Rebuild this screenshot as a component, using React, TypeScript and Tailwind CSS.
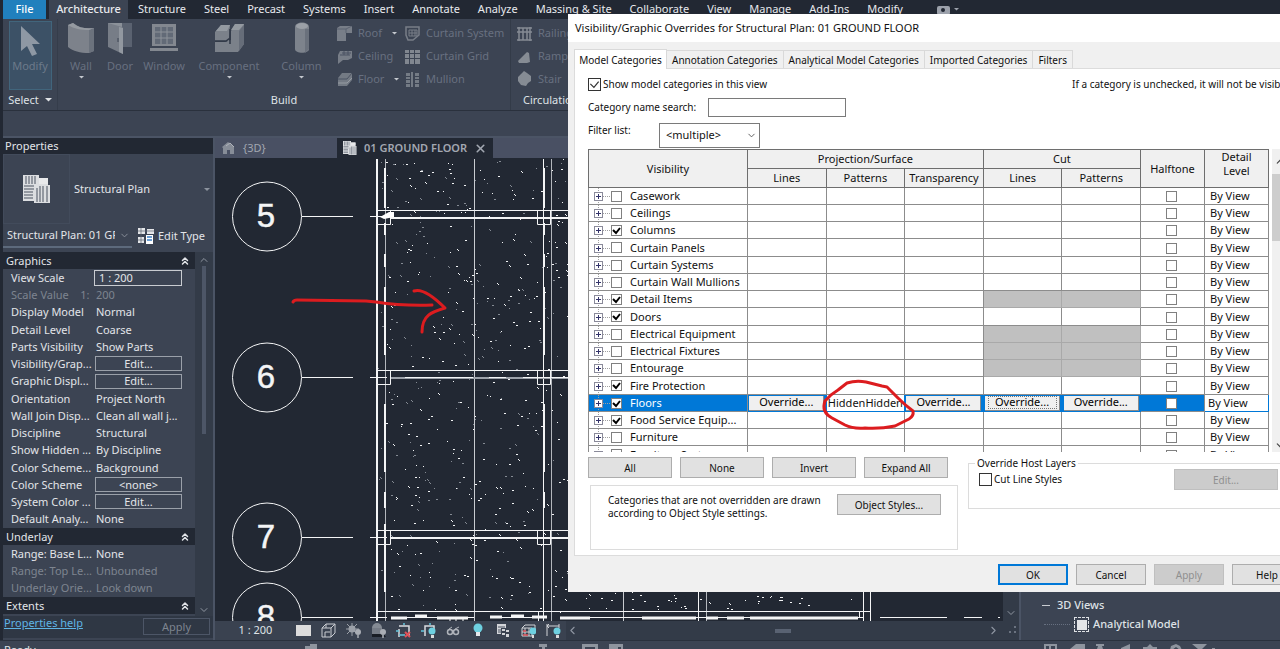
import * as React from 'react'
import clsx from 'clsx'
import { ChevronDown, ChevronLeft, ChevronRight, ChevronUp, ChevronsUp, X } from 'lucide-react'

const ribbonTabs = [
  'Structure',
  'Steel',
  'Precast',
  'Systems',
  'Insert',
  'Annotate',
  'Analyze',
  'Massing & Site',
  'Collaborate',
  'View',
  'Manage',
  'Add-Ins',
  'Modify',
]

type PropertyRow = {
  name: string
  value?: string
  kind?: 'header' | 'button' | 'input' | 'muted'
}

const propertyRows: PropertyRow[] = [
  { name: 'Graphics', kind: 'header' },
  { name: 'View Scale', value: '1 : 200', kind: 'input' },
  { name: 'Scale Value    1:', value: '200', kind: 'muted' },
  { name: 'Display Model', value: 'Normal' },
  { name: 'Detail Level', value: 'Coarse' },
  { name: 'Parts Visibility', value: 'Show Parts' },
  { name: 'Visibility/Grap...', value: 'Edit...', kind: 'button' },
  { name: 'Graphic Displ...', value: 'Edit...', kind: 'button' },
  { name: 'Orientation', value: 'Project North' },
  { name: 'Wall Join Disp...', value: 'Clean all wall j...' },
  { name: 'Discipline', value: 'Structural' },
  { name: 'Show Hidden ...', value: 'By Discipline' },
  { name: 'Color Scheme...', value: 'Background' },
  { name: 'Color Scheme', value: '<none>', kind: 'button' },
  { name: 'System Color ...', value: 'Edit...', kind: 'button' },
  { name: 'Default Analy...', value: 'None' },
  { name: 'Underlay', kind: 'header' },
  { name: 'Range: Base L...', value: 'None' },
  { name: 'Range: Top Le...', value: 'Unbounded', kind: 'muted' },
  { name: 'Underlay Orie...', value: 'Look down', kind: 'muted' },
  { name: 'Extents', kind: 'header' },
]

type Category = {
  name: string
  checked?: boolean
  noCut?: boolean
  selected?: boolean
}

const categories: Category[] = [
  { name: 'Casework' },
  { name: 'Ceilings' },
  { name: 'Columns', checked: true },
  { name: 'Curtain Panels' },
  { name: 'Curtain Systems' },
  { name: 'Curtain Wall Mullions' },
  { name: 'Detail Items', checked: true, noCut: true },
  { name: 'Doors', checked: true },
  { name: 'Electrical Equipment', noCut: true },
  { name: 'Electrical Fixtures', noCut: true },
  { name: 'Entourage', noCut: true },
  { name: 'Fire Protection', checked: true },
  { name: 'Floors', checked: true, selected: true },
  { name: 'Food Service Equip...', checked: true },
  { name: 'Furniture' },
  { name: 'Furniture Systems' },
]

const Caret = ({ className }: { className?: string }) => (
  <svg viewBox="0 0 8 4" className={clsx('shrink-0', className)} fill="currentColor">
    <path d="M0 0h8L4 4z" />
  </svg>
)

const WallIcon = () => (
  <svg width="28" height="30" viewBox="0 0 28 30">
    <path d="M1 2l5-2c6 5 13 6 21 5v23l-5 2C13 30 6 28 1 24z" fill="#7d828b" />
    <path d="M22 7l5-2v23l-5 2z" fill="#6b727d" />
    <path d="M1 2l5-2c6 5 13 6 21 5l-5 2C14 7 7 6 1 2z" fill="#959aa1" />
  </svg>
)

const DoorIcon = () => (
  <svg width="26" height="32" viewBox="0 0 26 32">
    <path d="M10 1h15v24H10z" fill="#5a6270" />
    <path d="M1 1h9l6 5v26L1 25z" fill="#777d87" />
    <path d="M16 6v26l-4-2V5z" fill="#9298a0" />
    <path d="M1 1h14v4z" fill="#8b9199" />
    <path d="M11 16v4" stroke="#3c4453" />
  </svg>
)

const WindowIcon = () => (
  <svg width="28" height="30" viewBox="0 0 28 30">
    <path d="M2 1h24v22H2zM0 25h28v3H0z" fill="#838890" />
    <path d="M5 4h18v17H5z" fill="#626a77" />
    <path d="M11 4v17M17 4v17M5 9h18M5 15h18" stroke="#8d929a" strokeWidth="1" />
  </svg>
)

const ComponentIcon = () => (
  <svg width="30" height="30" viewBox="0 0 30 30">
    <path d="M1 9l6-7h9l-1 16H1zM17 8l4-7h9v20l-6 8H1V19h10l6-2z" fill="#7b818a" />
    <path d="M7 2h9l-3 6H2zM21 1h9l-5 6h-8z" fill="#949aa1" />
    <path d="M25 8l5-6v19l-5 7z" fill="#666d79" />
    <path d="M1 18h11l4-3V6M16 15v6" stroke="#313947" strokeWidth="1.5" fill="none" />
  </svg>
)

const ColumnIcon = () => (
  <svg width="16" height="32" viewBox="0 0 16 32">
    <path d="M1 5c0-6 14-6 14 0v22c0 5-14 5-14 0z" fill="#7d838c" />
    <ellipse cx="8" cy="4" rx="6" ry="3" fill="#9ba0a7" />
    <path d="M11 7h4v20l-4 4z" fill="#6a717c" />
  </svg>
)

const smallShapes: Record<string, React.ReactNode> = {
  Roof: (
    <>
      <path d="M0 2l3-2h12v7H9v8H0z" fill="#787e88" />
      <path d="M0 3h9l6-3M9 7V3" stroke="#5b6370" fill="none" />
    </>
  ),
  Ceiling: (
    <>
      <path d="M3 2h12v7l-4 2H6l-5 4V6z" fill="#777d87" />
      <path d="M3 6h10M5 4h9M7 2v4M11 2v4" stroke="#4b5362" />
    </>
  ),
  Floor: (
    <>
      <path d="M5 1h10v7l-5 6H1V6z" fill="#737a84" />
      <path d="M1 7h9l5-6" stroke="#4b5362" fill="none" />
      <path d="M1 11h9l5-5" stroke="#969ba2" fill="none" />
    </>
  ),
  'Curtain System': (
    <>
      <path d="M1 1h13v8l-6 5H3L1 9z" fill="none" stroke="#787e88" strokeWidth="1.5" />
      <path d="M4 4h8v6H4zM4 7h8M7 4v6M10 4v6" fill="none" stroke="#787e88" />
    </>
  ),
  'Curtain Grid': (
    <path
      d="M0 1h4v3H0zM5 1h4v3H5zM10 1h5v3h-5zM0 5h4v4H0zM5 5h4v4H5zM10 5h5v4h-5zM0 10h4v5H0zM5 10h4v5H5zM10 10h5v5h-5z"
      fill="#818790"
    />
  ),
  Mullion: (
    <path
      d="M1 1h4v3H1zM1 5h4v2H1zM1 8h4v3H1zM1 12h4v3H1zM6 0h2v15H6zM10 1h4v3h-4zM10 5h4v2h-4zM10 8h4v3h-4zM10 12h4v3h-4z"
      fill="#747b85"
    />
  ),
  Railing: (
    <path d="M0 2h15M0 6h15M0 14h15M2 1v14M6 2v12M10 2v12M13 1v14" stroke="#858b94" strokeWidth="1.5" />
  ),
  Ramp: <path d="M1 12l9-9 2 1 1 9-3 1H2z" fill="#868c94" />,
  Stair: <path d="M1 6l3-3 3-3 3 2 4 3v5l-3 2-2 3-5-1-3-4z" fill="#868c94" />,
}

const SmallTool = ({ label, caret }: { label: string; caret?: boolean }) => (
  <button className="flex h-[23px] items-center gap-[6px] whitespace-nowrap text-[#687080]">
    <svg width="15" height="15" viewBox="0 0 15 15" className="shrink-0">
      {smallShapes[label]}
    </svg>
    {label}
    {caret && <Caret className="ml-1 w-[5px] text-[#c5c9cf]" />}
  </button>
)

const BigTool = ({
  label,
  icon,
  className,
  caret,
}: {
  label: string
  icon: React.ReactNode
  className: string
  caret?: boolean
}) => (
  <button className={clsx('flex flex-col items-center text-[#687080]', className)}>
    <span className="flex h-8 items-center">{icon}</span>
    <span className="mt-1 leading-4">{label}</span>
    {caret && <Caret className="mt-[2px] w-[5px] text-[#c5c9cf]" />}
  </button>
)

const PanelTitle = ({ children, className }: { children: React.ReactNode; className?: string }) => (
  <div className={clsx('mt-auto flex h-5 items-center gap-[6px] text-[#dfe2e6]', className ?? 'justify-center')}>
    {children}
  </div>
)

const Ribbon = () => (
  <header className="text-[11px]">
    <nav className="flex h-[19px] items-stretch gap-[18px] overflow-hidden bg-[#222833] pl-[3px] whitespace-nowrap text-[#e8eaee]">
      <div className="flex gap-[3px]">
        <button className="w-[43px] bg-[#2180bd] font-medium text-white">File</button>
        <button className="-mr-2 w-[79px] bg-[#3c4453] font-medium">Architecture</button>
      </div>
      {ribbonTabs.map((tab) => (
        <button key={tab}>{tab}</button>
      ))}
      <span className="flex items-center gap-1 pl-4 text-[#9ca1ab]">
        <svg width="13" height="10" viewBox="0 0 13 10">
          <rect y="1" width="13" height="9" rx="2" fill="#9ca1ab" />
          <circle cx="6" cy="5" r="2" fill="#222833" />
        </svg>
        <Caret className="w-[5px]" />
      </span>
    </nav>
    <div className="ml-[3px] flex h-[92px] border-b border-[#2a313d] bg-[#3c4453]">
      <section className="flex w-[55px] shrink-0 flex-col border-r border-[#353d4b]">
        <button className="mx-auto mt-[2px] flex h-[70px] w-[43px] flex-col items-center border border-[#41657c] bg-[#3c5166] text-[#6c7a8a]">
          <svg width="22" height="34" viewBox="0 0 22 34" className="mt-[2px]">
            <path d="M2 2v25l6-5 5 10 5-2-5-10h8z" fill="#8e98a4" />
          </svg>
          <span className="leading-4">Modify</span>
        </button>
        <PanelTitle>
          Select <Caret className="w-[7px]" />
        </PanelTitle>
      </section>
      <section className="flex w-[453px] shrink-0 flex-col border-r border-[#333b48]">
        <div className="flex pt-[3px]">
          <BigTool label="Wall" icon={<WallIcon />} className="ml-1 w-[38px]" caret />
          <BigTool label="Door" icon={<DoorIcon />} className="w-10" />
          <BigTool label="Window" icon={<WindowIcon />} className="w-12" />
          <BigTool label="Component" icon={<ComponentIcon />} className="w-[82px]" caret />
          <BigTool label="Column" icon={<ColumnIcon />} className="w-[63px]" caret />
          <div className="w-[68px] pl-1">
            <SmallTool label="Roof" caret />
            <SmallTool label="Ceiling" />
            <SmallTool label="Floor" caret />
          </div>
          <div className="pl-1">
            <SmallTool label="Curtain System" />
            <SmallTool label="Curtain Grid" />
            <SmallTool label="Mullion" />
          </div>
        </div>
        <PanelTitle>Build</PanelTitle>
      </section>
      <section className="flex w-24 flex-col pt-[3px] pl-[6px]">
        <SmallTool label="Railing" />
        <SmallTool label="Ramp" />
        <SmallTool label="Stair" />
        <PanelTitle className="pl-[6px]">Circulation</PanelTitle>
      </section>
    </div>
    <div className="ml-[3px] h-[27px] border-b-2 border-[#4b5465] bg-[#3c4453]" />
  </header>
)

const PlanIcon = ({ size }: { size: number }) => (
  <svg width={size} height={size} viewBox="0 0 28 28" className="shrink-0">
    <path d="M0 0h16v3h9v7h2v18H11v-2H0z" fill="#dcdee1" />
    <path
      d="M3 1v8M6 1v8M9 1v8M12 1v8M1 11h10M1 14h10M1 17h9M1 20h9M1 23h9M14 13v14M17 11v16M20 11v16M24 11v16"
      stroke="#4a5260"
    />
    <path d="M16 3h9v6h-9z" fill="#e8e9eb" />
  </svg>
)

const PropertiesPanel = () => (
  <aside className="ml-[3px] flex w-[212px] shrink-0 flex-col border-r-2 border-[#4b5465] bg-[#3c4453] pb-[2px] text-[11px] text-[#e3e5e9]">
    <h2 className="h-4 bg-[#222833] px-[2px] leading-4">Properties</h2>
    <button className="flex h-[70px] shrink-0 items-center pr-[3px] text-left">
      <span className="flex h-full w-[67px] items-center justify-center border border-[#424b5b]">
        <PlanIcon size={28} />
      </span>
      <span className="pl-1">Structural Plan</span>
      <Caret className="ml-auto w-[6px] text-[#8c939e]" />
    </button>
    <div className="flex h-7 items-start">
      <button className="flex h-6 w-[129px] items-center border-b-2 border-[#5d6a7c] pl-1">
        <span className="w-[108px] overflow-hidden text-left whitespace-nowrap">Structural Plan: 01 GROUND</span>
        <ChevronDown size={11} className="ml-1 shrink-0 text-[#8c939e]" />
      </button>
      <button className="flex h-6 items-center gap-1 pl-[6px]">
        <svg width="16" height="16" viewBox="0 0 16 16">
          <path d="M0 0h7v6H0zM9 1h7v5H9zM0 9h6v6H0z" fill="#e3e5e8" />
          <path d="M8 7h7v9H8z" fill="#fff" />
          <path d="M9 9h5M9 12h5" stroke="#3b7fc4" strokeWidth="1.5" />
          <path d="M3 0v15M0 3h16M0 12h7" stroke="#59616e" strokeWidth=".7" />
        </svg>
        Edit Type
      </button>
    </div>
    <div className="flex min-h-0 flex-1 overflow-hidden">
      <table className="w-[192px] table-fixed self-start">
        <colgroup>
          <col className="w-[89px]" />
          <col />
        </colgroup>
        <tbody>
          {propertyRows.map((row) =>
            row.kind === 'header' ? (
              <tr key={row.name} className="h-[17px] bg-[#222833] nth-[4n]:h-[18px]">
                <th colSpan={2} className="p-0 text-left font-normal">
                  <div className="flex items-center justify-between pr-1 pl-[3px] leading-4">
                    {row.name}
                    <ChevronsUp size={12} strokeWidth={3} />
                  </div>
                </th>
              </tr>
            ) : (
              <tr
                key={row.name}
                className={clsx('h-[17px] nth-[4n]:h-[18px]', row.kind === 'muted' && 'text-[#7e8590]')}
              >
                <td className="overflow-hidden p-0 pl-2 leading-4 whitespace-pre">{row.name}</td>
                <td className="p-0 leading-4 whitespace-nowrap">
                  {row.kind === 'button' && (
                    <button className="ml-[3px] block h-[15px] w-[87px] border border-[#9aa0a9] leading-3">
                      {row.value}
                    </button>
                  )}
                  {row.kind === 'input' && (
                    <input
                      aria-label={row.name}
                      defaultValue={row.value}
                      className="ml-[2px] block h-4 w-[88px] border border-[#c9ccd1] px-1"
                    />
                  )}
                  {(!row.kind || row.kind === 'muted') && <span className="pl-1">{row.value}</span>}
                </td>
              </tr>
            ),
          )}
        </tbody>
      </table>
      <div className="flex flex-1 flex-col items-center justify-between bg-[#333b48] text-[#8f96a1]">
        <ChevronUp size={12} className="mt-[2px] shrink-0" />
        <div className="mb-auto h-[168px] w-1 bg-[#4d5667]" />
        <ChevronDown size={12} className="shrink-0" />
      </div>
    </div>
    <div className="flex h-[22px] shrink-0 items-start justify-between bg-[#2f3744] pr-[3px]">
      <a href="#help" className="pl-[1px] leading-[14px] text-[#5fb4e5] underline">
        Properties help
      </a>
      <button className="mt-[2px] h-[17px] w-[67px] border border-[#4d5667] leading-4 text-[#7e8590]">Apply</button>
    </div>
  </aside>
)

// small LCG so the concrete hatch comes out the same on every render
const makeDots = (count: number, x0: number, y0: number, w: number, h: number, start: number) => {
  let seed = start
  const next = () => {
    seed = (seed * 1664525 + 1013904223) % 4294967296
    return seed / 4294967296
  }
  return Array.from({ length: count }, () => {
    const x = Math.round(x0 + next() * w)
    const y = Math.round(y0 + next() * h)
    const kind = next()
    if (kind < 0.4) return `M${x} ${y}h2v1h-2z`
    if (kind < 0.6) return `M${x} ${y}h1v1h1v1h-1v-1h-1z`
    return `M${x} ${y}h1v1h-1z`
  }).join('')
}

const hatch = makeDots(330, 386, 159, 182, 452, 7) + makeDots(45, 568, 592, 296, 18, 21)
const faintHatch = makeDots(200, 378, 159, 190, 452, 99)

const bubbles = [
  { label: '5', y: 216 },
  { label: '6', y: 377 },
  { label: '7', y: 537 },
  { label: '8', y: 617 },
]

const PlanDrawing = () => (
  <svg width="785" height="463" viewBox="215 158 785 463" className="block shrink-0">
    <path d={faintHatch} fill="#858b94" />
    <path d={hatch} fill="#f4f5f6" />
    <g fill="none" stroke="#f4f5f6">
      <path d="M377 159v462" strokeWidth="2" />
      <path d="M385.5 159v462M551.5 159v462M706.5 592v29" stroke="#b3b7bd" />
      <path d="M385 168v40M385 223v12M385 254v13M385 287v68M385 404v68M385 492v16M385 524v68" strokeWidth="2" />
      <path d="M543.5 159v462M544.5 168v40M544.5 223v12M544.5 254v13M544.5 287v68M544.5 404v68M544.5 492v16" />
      <path d="M474.5 159v462M623.5 592v29" stroke="#c9ccd1" />
      <path d="M698.5 592v29M863.5 592v29M870.5 592v29M859.5 611v7" />
      {[210, 370, 530].map((y) => (
        <React.Fragment key={y}>
          <path d={`M377 ${y + 0.5}h191`} />
          <path d={`M390 ${y + 8}h178`} stroke={y === 370 ? '#9ea3ab' : '#f4f5f6'} strokeWidth="2" />
          <path d={`M405 ${y + 7.5}h68M489 ${y + 7.5}h17M523 ${y + 7.5}h45`} />
          <path d={`M377.5 ${y + 0.5}h13v14h-13zM537.5 ${y + 0.5}h13v14h-13z`} />
        </React.Fragment>
      ))}
      <path d="M377 611.5h494" />
      <path d="M391 617.5h83M490 617.5h52M560 617.5h304" strokeWidth="1" />
      <path d="M391 618h16M415 616h12M437 618h31M490 617h12M511 616h13M532 617h15M560 618h30M642 618h54M706 618h12M727 618h17M750 618h108" strokeWidth="3" />
      <path d="M450 617v5M456 617v6M463 617v5M538.5 611v10" />
      <path d="M880 617.5h67M964 617.5h18M998 617.5h2" />
      {bubbles.map(({ label, y }) => (
        <g key={label}>
          <circle cx="267" cy={y + 0.5} r="34.5" />
          <path d={`M302 ${y + 0.5}h51M370 ${y + 0.5}h17`} />
        </g>
      ))}
    </g>
    <path d="M380 217l9-5h5v5l-10 2z" fill="#fff" />
    {bubbles.map(({ label, y }) => (
      <text
        key={label}
        x="266"
        y={y + 11}
        textAnchor="middle"
        fill="#f4f5f6"
        stroke="#f4f5f6"
        strokeWidth=".5"
        className="font-['Liberation_Sans',sans-serif] text-[33px]"
      >
        {label}
      </text>
    ))}
  </svg>
)

const viewControls: { name: string; shape: React.ReactNode }[] = [
  { name: 'Detail level', shape: <path d="M0 2h15v11H0z" fill="#dcdcdc" /> },
  {
    name: 'Visual style',
    shape: <path d="M1 5h9v9H1zM1 5l4-4h9l-4 4M14 1v9l-4 4M5 5V1M4 9h5M4 9v5" stroke="#c9ccd1" fill="none" />,
  },
  {
    name: 'Sun path',
    shape: (
      <>
        <path d="M6 0v13M0 6h13M1 1l10 10M11 1L1 11" stroke="#9ba0a8" />
        <circle cx="6" cy="6" r="3.5" fill="#9ba0a8" />
        <circle cx="12" cy="9" r="3" fill="#a9adb4" />
        <path d="M11 12h2v3h-2z" fill="#8c9199" />
      </>
    ),
  },
  {
    name: 'Shadows',
    shape: (
      <>
        <path d="M1 10h11l3 4H1z" fill="#191d25" />
        <circle cx="6" cy="5" r="5" fill="#858b94" />
        <path d="M1 5h9v6H1z" fill="#767c86" />
        <circle cx="12" cy="9" r="3" fill="#a9adb4" />
        <path d="M11 12h2v3h-2z" fill="#8c9199" />
      </>
    ),
  },
  {
    name: 'Crop view',
    shape: (
      <>
        <path d="M3 6v8M3 3h10v10" stroke="#d9dbdf" strokeWidth="1.5" fill="none" />
        <path d="M8 0v2M0 8h3M3 12h6" stroke="#63c5dc" strokeWidth="1.5" />
        <path d="M9 9l5 5M14 9l-5 5" stroke="#e05259" strokeWidth="2" />
      </>
    ),
  },
  {
    name: 'Show crop region',
    shape: (
      <>
        <path d="M4 13V3h9v4" stroke="#d9dbdf" strokeWidth="1.5" fill="none" />
        <path d="M9 0v2M0 8h3" stroke="#63c5dc" strokeWidth="1.5" />
        <circle cx="11" cy="8" r="3.5" fill="#6ed0e0" />
        <path d="M10 12h3v3h-3z" fill="#dcdcdc" />
      </>
    ),
  },
  {
    name: 'Hide/isolate',
    shape: (
      <>
        <circle cx="4" cy="9" r="2.5" stroke="#b0b4ba" strokeWidth="1.5" fill="none" />
        <circle cx="10" cy="9" r="2.5" stroke="#b0b4ba" strokeWidth="1.5" fill="none" />
        <path d="M3 6l3-2M9 6l4-2M6 8h2" stroke="#b0b4ba" />
      </>
    ),
  },
  {
    name: 'Reveal hidden',
    shape: (
      <>
        <circle cx="7" cy="5" r="4.5" fill="#6ed0e0" />
        <path d="M5 9h4v4H5z" fill="#e5e7ea" />
      </>
    ),
  },
  {
    name: 'View properties',
    shape: (
      <>
        <path d="M1 1h9v4H5v6H1z" fill="#d2d4d8" />
        <path d="M6 6h3v2H6zM10 7h3v2h-3zM6 10h3v2H6zM10 11h3v3h-3z" fill="#d2d4d8" />
        <path d="M2 4h7M2 7h4M2 9h4" stroke="#4a5260" />
      </>
    ),
  },
  {
    name: 'Analytical model',
    shape: (
      <>
        <path d="M1 5h10v8H1zM4 2h10v5M1 5l3-3M4 5v8M8 5v8M1 9h10" stroke="#cfd2d6" fill="none" />
        <path d="M2 12h5M2 8h3" stroke="#e05259" strokeWidth="1.5" />
        <circle cx="12" cy="8" r="3.5" fill="#6ed0e0" />
        <path d="M11 12h2v3h-2z" fill="#dcdcdc" />
      </>
    ),
  },
  {
    name: 'Constraints',
    shape: (
      <>
        <path d="M1 1v12M13 1v4M1 3h12M3 1L1 3l2 2" stroke="#d2d4d8" fill="none" />
        <circle cx="11" cy="8" r="3.5" fill="#6ed0e0" />
        <path d="M10 12h3v3h-3z" fill="#dcdcdc" />
      </>
    ),
  },
]

const Workspace = () => (
  <main className="flex min-w-0 flex-1 flex-col bg-[#222833]">
    <div className="flex h-5 shrink-0 bg-[#495063] text-[11px] text-[#a2a7b1]">
      <button className="flex w-[122px] items-center gap-2 pl-[6px]">
        <svg width="14" height="14" viewBox="0 0 14 14">
          <path d="M1 6l6-5 6 5v7H9V9H6v4H2V7z" fill="#878d98" />
          <path d="M5 5l4-3 4 4" stroke="#b0b4bb" fill="none" />
        </svg>
        {'{3D}'}
      </button>
      <button className="flex w-[156px] items-center gap-[7px] bg-[#222833] pl-[6px] font-semibold whitespace-nowrap">
        <PlanIcon size={14} />
        01 GROUND FLOOR
        <X size={13} strokeWidth={3} className="shrink-0" />
      </button>
    </div>
    <div className="flex min-h-0 flex-1">
      <div className="min-w-0 flex-1 overflow-hidden">
        <PlanDrawing />
      </div>
      <div className="flex w-4 items-end justify-center bg-[#333b48] pb-[2px] text-[#8f96a1]">
        <ChevronDown size={12} />
      </div>
    </div>
    <div className="flex h-[19px] shrink-0 items-center bg-[#3a4250] text-[#8f96a1]">
      <button className="w-[81px] text-center text-[11px] text-[#dfe2e6]">1 : 200</button>
      <div className="flex gap-[10px]">
        {viewControls.map((control) => (
          <button key={control.name} aria-label={control.name}>
            <svg width="15" height="15" viewBox="0 0 15 15" className="block">
              {control.shape}
            </svg>
          </button>
        ))}
      </div>
      <div className="ml-[5px] flex h-full flex-1 items-center justify-between bg-[#333b48] pr-[2px]">
        <ChevronLeft size={13} />
        <div className="h-1 w-4 bg-[#596272]" />
        <div className="flex items-center gap-2">
          <ChevronRight size={13} />
          <svg width="9" height="9" viewBox="0 0 9 9" fill="#6b7380">
            <path d="M6 0h2v2H6zM6 5h2v2H6zM1 5h2v2H1z" />
          </svg>
        </div>
      </div>
    </div>
  </main>
)

const ProjectBrowser = () => (
  <aside className="flex w-[261px] shrink-0 flex-col justify-end border-l-2 border-[#4b5465] bg-[#3c4453] pb-[6px] text-[11px] font-medium text-[#dfe2e6]">
    <div className="flex h-[19px] items-center gap-[7px] pl-[21px]">
      <span className="h-px w-2 bg-[#c9ccd1]" />
      3D Views
    </div>
    <div className="flex h-[19px] items-center gap-1 pl-[23px]">
      <span className="w-[26px] border-t border-dotted border-[#677080]" />
      <span className="flex size-[15px] items-center justify-center border border-dashed border-[#dfe2e6]">
        <span className="size-[10px] bg-[#e3e5e8]" />
      </span>
      Analytical Model
    </div>
  </aside>
)

const StatusBar = () => (
  <footer className="flex h-[9px] shrink-0 items-start overflow-hidden border-t border-[#2a313d] bg-[#3c4453] pt-[3px] text-[11px] leading-3 text-[#dfe2e6]">
    <span className="w-[304px] shrink-0 pl-1">Ready</span>
    <svg width="976" height="8" viewBox="304 0 976 8" className="shrink-0" fill="#8e949e">
      <path d="M305 2h5V0h7v8h-12zM539 0h8v3h-2v5h-3V3h-3zM582 0h16v8h-3V3h-10v5h-3zM609 0h14v8h-2V3h-3v5h-9z" />
      <path d="M1044 0h13v8h-2V2h-4v6h-2V2h-3v6h-2zM1070 5l6-5h9v5l-4 3h-11zM1096 0h8v2h-2l2 6h-8l2-6h-2zM1121 4l9-4v8h-9zM1150 0l3 3h4v3h-14V3h4zM1171 2l5-2 4 2 2 4h-2l-4-3-4 3h-2zM1192 0h15l-5 5v3h-4V5zM1212 4h3v3h-3z" />
    </svg>
  </footer>
)

const CheckBox = ({
  id,
  label,
  checked,
  large,
}: {
  id?: string
  label?: string
  checked?: boolean
  large?: boolean
}) => (
  <span className={clsx('relative inline-block shrink-0 align-middle', large ? 'size-[13px]' : 'size-[11px]')}>
    <input
      id={id}
      type="checkbox"
      aria-label={label}
      defaultChecked={checked}
      className={clsx(
        'peer block size-full appearance-none border bg-white',
        large ? 'border-[#333]' : 'border-[#808080]',
      )}
    />
    <svg
      viewBox="0 0 11 11"
      className="pointer-events-none absolute inset-0 hidden size-full peer-checked:block"
      fill="none"
      stroke={large ? '#333' : '#000'}
      strokeWidth={large ? 1 : 2}
    >
      <path d="M2 5l3 3 4-5" />
    </svg>
  </span>
)

const DialogButton = ({ className, ...props }: React.ComponentProps<'button'>) => (
  <button
    className={clsx(
      'h-[21px] border border-[#adadad] bg-[#e1e1e1] leading-4 text-[#111] disabled:border-[#bfbfbf] disabled:bg-[#cccccc] disabled:text-[#8f8f8f]',
      className,
    )}
    {...props}
  />
)

const OverrideCell = ({ focused }: { focused?: boolean }) => (
  <td className="border border-[#0078d7] p-0">
    <button className="mx-auto block h-[15px] w-[75px] border-r border-b border-[#8a8a8a] bg-[#f0f0f0] text-black">
      <span
        className={clsx(
          'mx-auto block h-[13px] w-[69px] leading-3',
          focused && 'outline-1 -outline-offset-1 outline-[#777] outline-dotted',
        )}
      >
        Override...
      </span>
    </button>
  </td>
)

const CategoryRow = ({ name, checked, noCut, selected }: Category) => {
  const cell = 'border border-[#8c8c8c] p-0'
  const cut = clsx(cell, noCut && 'border-[#a9a9a9] bg-[#c0c0c0]')
  return (
    <tr className={clsx('h-[17px] nth-[4n]:h-[18px]', selected && 'bg-[#0078d7]')}>
      <td className={cell}>
        <div className={clsx('flex h-4 items-center leading-4 whitespace-nowrap', selected && 'text-white')}>
          <svg width="22" height="16" viewBox="0 0 22 16" className="shrink-0">
            <path d="M9.500 0v16M14 8.500h8" stroke="#a0a0a0" strokeDasharray="1 1" />
            <rect x="5.500" y="4.500" width="8" height="8" fill="#fff" stroke="#8a8a9a" />
            <path d="M7 8.500h5M9.500 6v5" stroke="#33336a" />
          </svg>
          <CheckBox checked={checked} label={`${name} visible`} />
          <span className="pl-2">{name}</span>
        </div>
      </td>
      {selected ? (
        <>
          <OverrideCell />
          <td className="border border-[#0078d7] bg-white p-0 text-center">
            <div className="h-4 leading-4 whitespace-nowrap">HiddenHidden</div>
          </td>
          <OverrideCell />
          <OverrideCell focused />
          <OverrideCell />
        </>
      ) : (
        <>
          <td className={cell} />
          <td className={cell} />
          <td className={cell} />
          <td className={cut} />
          <td className={cut} />
        </>
      )}
      <td className={clsx(cell, 'pr-[3px] text-center leading-3')}>
        <CheckBox label={`${name} halftone`} />
      </td>
      <td className={clsx(cell, selected && 'border-[#0078d7] bg-white')}>
        <div className={clsx('h-4 leading-4', selected ? 'pl-[3px]' : 'pl-[5px]')}>By View</div>
      </td>
    </tr>
  )
}

const CategoryTable = () => {
  const head = 'border border-[#6e6e6e] p-0 font-normal leading-4'
  return (
    <div className="flex h-[303px] overflow-hidden text-[11px]">
      <table className="w-[681px] shrink-0 table-fixed border-collapse self-start">
        <colgroup>
          <col className="w-[159px]" />
          <col span={5} />
          <col className="w-16" />
          <col className="w-16" />
        </colgroup>
        <thead className="bg-[#f0f0f0]">
          <tr className="h-[19px]">
            <th rowSpan={2} className={head}>
              Visibility
            </th>
            <th colSpan={3} className={head}>
              Projection/Surface
            </th>
            <th colSpan={2} className={head}>
              Cut
            </th>
            <th rowSpan={2} className={head}>
              Halftone
            </th>
            <th rowSpan={2} className={clsx(head, 'align-top')}>
              <div className="leading-[14px]">
                Detail
                <br />
                Level
              </div>
            </th>
          </tr>
          <tr className="h-[19px]">
            {['Lines', 'Patterns', 'Transparency', 'Lines', 'Patterns'].map((title, i) => (
              <th key={i} className={head}>
                {title}
              </th>
            ))}
          </tr>
        </thead>
        <tbody>
          {categories.map((category) => (
            <CategoryRow key={category.name} {...category} />
          ))}
        </tbody>
      </table>
      <div className="ml-[3px] flex w-4 flex-col items-center bg-[#f0f0f0] text-[#444]">
        <ChevronUp size={13} className="my-[6px] shrink-0" />
        <div className="h-[67px] w-full shrink-0 bg-[#cdcdcd]" />
        <ChevronDown size={13} className="mt-auto shrink-0" />
      </div>
    </div>
  )
}

const dialogTabs = ['Annotation Categories', 'Analytical Model Categories', 'Imported Categories', 'Filters']

const OverridesDialog = () => (
  <div
    role="dialog"
    aria-label="Visibility/Graphic Overrides"
    className="absolute top-[14px] -right-8 left-[568px] bg-[#f0f0f0] text-[10px] whitespace-nowrap text-[#111]"
  >
    <h1 className="h-7 bg-white pl-[7px] text-[11px] leading-7">
      Visibility/Graphic Overrides for Structural Plan: 01 GROUND FLOOR
    </h1>
    <div className="flex items-end pt-[7px] pl-[6px]">
      <button className="-mb-px h-5 w-[93px] border border-b-0 border-[#d9d9d9] bg-white leading-4">
        Model Categories
      </button>
      {dialogTabs.map((tab) => (
        <button key={tab} className="h-[18px] border border-b-0 border-l-0 border-[#d9d9d9] px-[5px] leading-4">
          {tab}
        </button>
      ))}
    </div>
    <div className="mr-2 ml-[6px] border border-[#dcdcdc] bg-white pt-[5px] pl-[13px]">
      <div className="flex h-5 items-center">
        <CheckBox id="show-model" checked large />
        <label htmlFor="show-model" className="pl-[2px]">
          Show model categories in this view
        </label>
        <p className="ml-auto w-[231px]">If a category is unchecked, it will not be visible.</p>
      </div>
      <div className="mt-[3px] flex h-[21px] items-center">
        <label htmlFor="search" className="w-[120px]">
          Category name search:
        </label>
        <input id="search" className="h-[19px] w-[138px] border border-[#7a7a7a] px-1" />
      </div>
      <div className="mt-[5px] flex h-[26px] items-start">
        <label htmlFor="filter" className="w-[71px]">
          Filter list:
        </label>
        <div className="relative">
          <select
            id="filter"
            className="block h-[25px] w-[101px] appearance-none border border-[#7a7a7a] bg-white pl-[6px] text-[11px]"
          >
            <option>&lt;multiple&gt;</option>
          </select>
          <ChevronDown size={11} className="pointer-events-none absolute top-[7px] right-[3px] text-[#555]" />
        </div>
      </div>
      <CategoryTable />
      <div className="flex gap-[10px] pt-[5px]">
        <div className="w-[370px] shrink-0">
          <div className="flex gap-2">
            {['All', 'None', 'Invert', 'Expand All'].map((label) => (
              <DialogButton key={label} className="w-[84px]">
                {label}
              </DialogButton>
            ))}
          </div>
          <div className="mt-[7px] ml-[2px] flex h-[65px] items-start justify-between border border-[#dcdcdc] pt-2 pr-4 pl-[17px]">
            <p className="leading-[13px]">
              Categories that are not overridden are drawn
              <br />
              according to Object Style settings.
            </p>
            <DialogButton className="w-[104px]">Object Styles...</DialogButton>
          </div>
        </div>
        <fieldset className="mb-[46px] h-[52px] flex-1 border border-[#dcdcdc] pr-6 pl-[10px]">
          <legend className="-ml-1 px-[2px] leading-3">Override Host Layers</legend>
          <div className="flex items-center">
            <CheckBox id="cut-lines" large />
            <label htmlFor="cut-lines" className="pl-[2px]">
              Cut Line Styles
            </label>
            <DialogButton disabled className="ml-auto w-[104px]">
              Edit...
            </DialogButton>
          </div>
        </fieldset>
      </div>
    </div>
    <div className="flex justify-end gap-2 pt-2 pr-[10px] pb-[7px]">
      <DialogButton className="w-[70px] outline-2 -outline-offset-2 outline-[#0078d7]">OK</DialogButton>
      <DialogButton className="w-[70px]">Cancel</DialogButton>
      <DialogButton disabled className="w-[70px]">
        Apply
      </DialogButton>
      <DialogButton className="w-[70px]">Help</DialogButton>
    </div>
  </div>
)

const Markup = () => (
  <svg
    width="700"
    height="180"
    viewBox="280 270 700 180"
    className="pointer-events-none absolute top-[270px] left-[280px]"
    fill="none"
    stroke="#dc1c1f"
    strokeWidth="3"
    strokeLinecap="round"
    strokeLinejoin="round"
  >
    <path d="M293 302q1-2 4-2l69 1 10 1q26 4 56 3" />
    <path d="M414 291c8-3 20 6 31 17-13 4-23 7-23 24" />
    <path d="M825 401q6-7 13-11l9-7q9-3 19-1l16 4 5 1 11 11q8 8 15 13 1 5-4 8l-14 7q-15 3-30 2-12 1-20-3l-13-7q-11-6-7-17z" />
  </svg>
)

export default function App() {
  return (
    <div className="relative flex h-screen flex-col overflow-hidden bg-[#222833] font-['Noto_Sans',sans-serif]">
      <Ribbon />
      <div className="flex min-h-0 flex-1">
        <PropertiesPanel />
        <Workspace />
        <ProjectBrowser />
      </div>
      <StatusBar />
      <OverridesDialog />
      <Markup />
    </div>
  )
}
